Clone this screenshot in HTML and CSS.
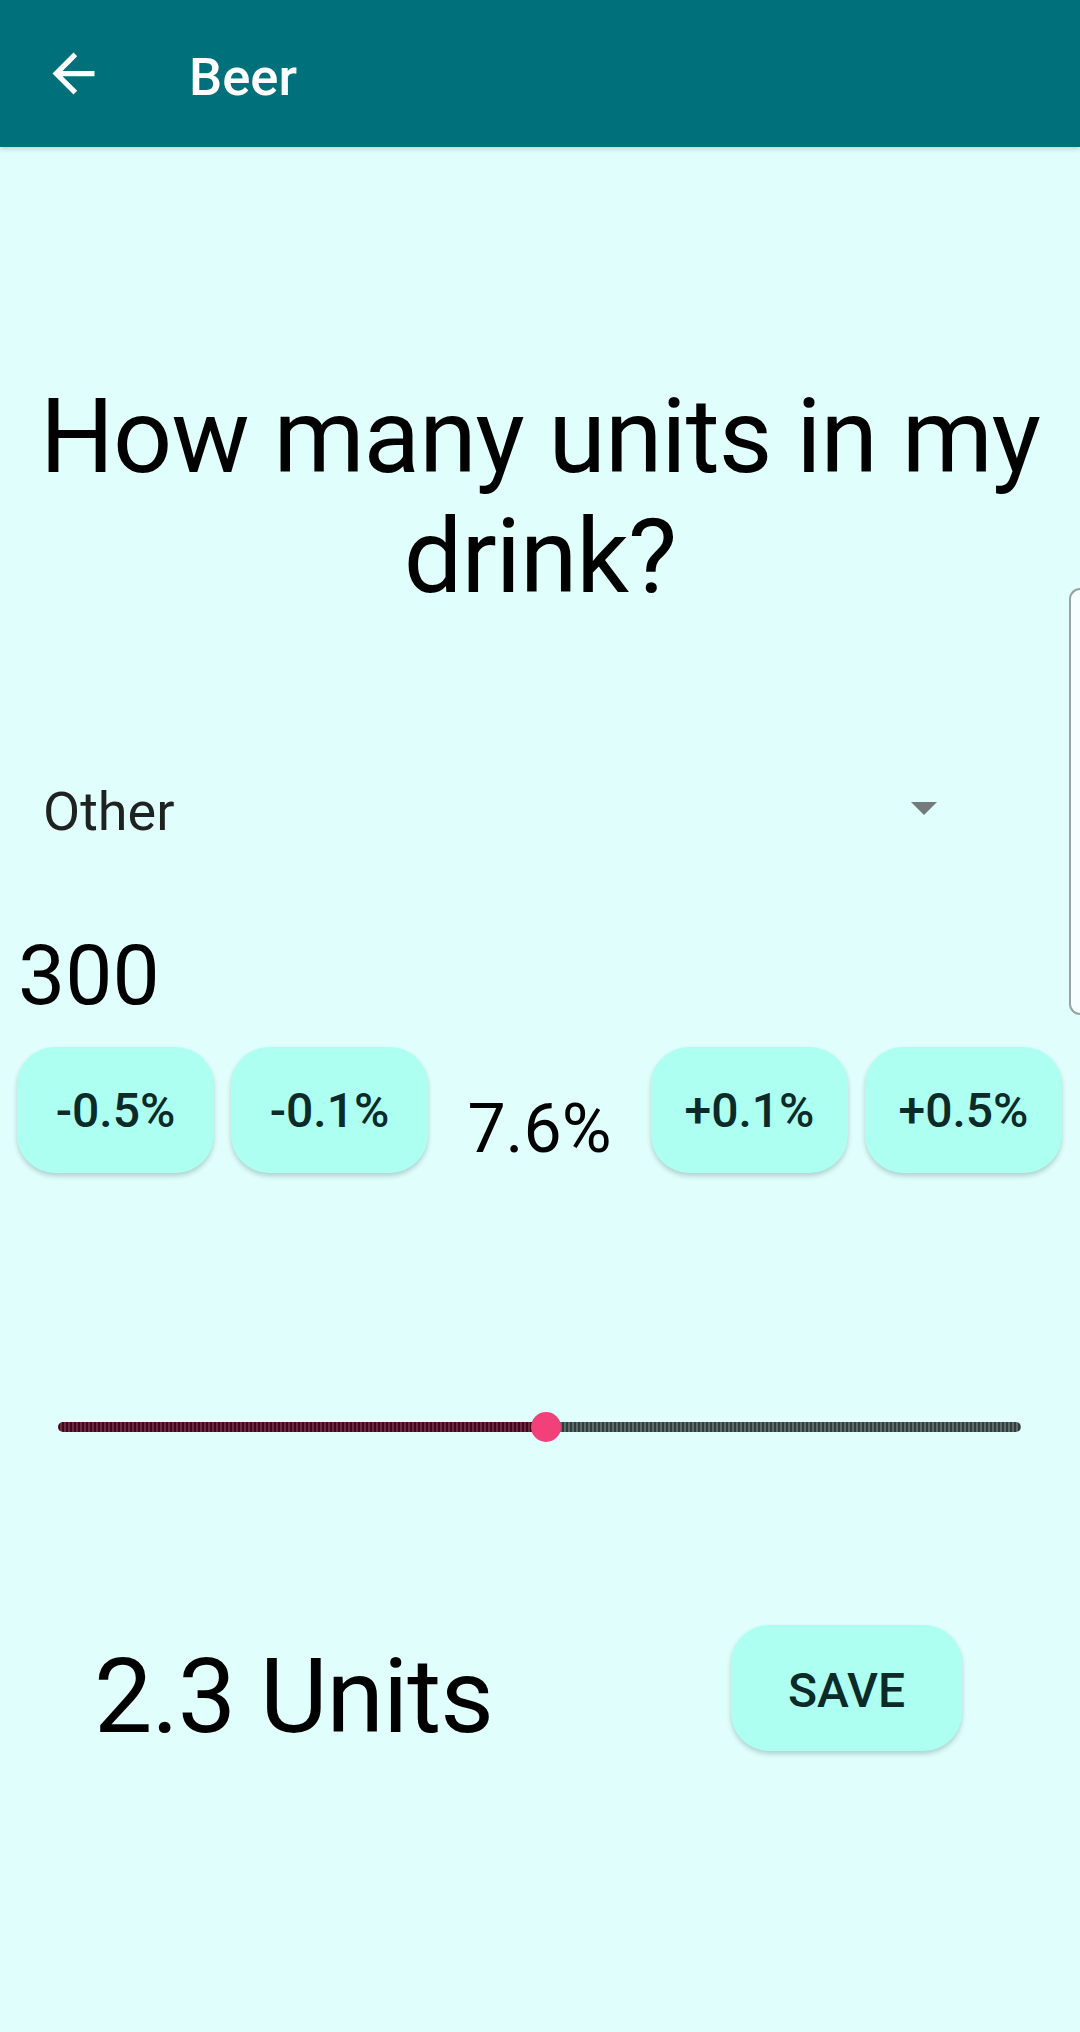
FILE: index.html
```html
<!DOCTYPE html>
<html>
<head>
<meta charset="utf-8">
<link rel="stylesheet" href="styles.css">
</head>
<body>
<header class="appbar">
  <svg class="back" viewBox="0 0 24 24" width="63" height="63"><path fill="#ffffff" d="M20 11H7.83l5.59-5.59L12 4l-8 8 8 8 1.41-1.41L7.83 13H20v-2z"/></svg>
  <div class="title">Beer</div>
</header>
<main class="content">
  <h1 class="question">How many units in my drink?</h1>
  <div class="spinner">
    <span class="spinner-text">Other</span>
    <span class="spinner-arrow"></span>
  </div>
  <div class="volume">300</div>
  <div class="abv-row">
    <div class="btn">-0.5%</div>
    <div class="btn">-0.1%</div>
    <div class="abv">7.6%</div>
    <div class="btn">+0.1%</div>
    <div class="btn">+0.5%</div>
  </div>
  <div class="slider">
    <div class="track">
      <div class="track-active" style="width:50.7%"></div>
      <div class="track-rest"></div>
    </div>
    <div class="thumb" style="left:calc(50.7% - 15px)"></div>
  </div>
  <div class="result-row">
    <div class="units">2.3 Units</div>
    <div class="btn save">SAVE</div>
  </div>
</main>
<div class="edge-panel"></div>
</body>
</html>
```
FILE: styles.css
```css
html, body {
  margin: 0;
  padding: 0;
  background: #e0fffc;
}
body {
  width: 1080px;
  min-height: 2032px;
  overflow: hidden;
  position: relative;
  font-family: Roboto, "Liberation Sans", sans-serif;
  color: #000;
}
.appbar {
  height: 147px;
  background: #00707a;
  display: flex;
  align-items: center;
  box-shadow: 0 2px 5px rgba(0, 0, 0, 0.18);
  position: relative;
  z-index: 1;
}
.back {
  margin-left: 42px;
  flex: none;
  display: block;
}
.title {
  margin-left: 84px;
  margin-top: 7px;
  font-size: 52.5px;
  line-height: 64px;
  font-weight: 500;
  color: #ffffff;
}
.content {
  display: flex;
  flex-direction: column;
}
.question {
  margin: 230px 0 0 0;
  font-size: 104px;
  line-height: 120px;
  font-weight: 400;
  letter-spacing: -1px;
  text-align: center;
  color: #000;
}
.spinner {
  margin: 163px 0 0 0;
  padding: 0 143px 0 43px;
  height: 64px;
  display: flex;
  align-items: center;
  justify-content: space-between;
}
.spinner-text {
  font-size: 54px;
  line-height: 64px;
  color: #1e2221;
}
.spinner-arrow {
  width: 0;
  height: 0;
  border-left: 13px solid transparent;
  border-right: 13px solid transparent;
  border-top: 13px solid #757b7b;
  margin-top: -8px;
}
.volume {
  margin: 83px 0 0 18px;
  font-size: 84px;
  line-height: 98px;
  color: #000;
}
.abv-row {
  margin-top: 22px;
  padding: 0 18px 0 17px;
  display: flex;
  gap: 17px;
  align-items: flex-start;
}
.btn {
  flex: none;
  width: 197px;
  height: 126px;
  border-radius: 38px;
  background: #adfff1;
  box-shadow: 0 3px 5px rgba(0, 40, 40, 0.22);
  display: flex;
  align-items: center;
  justify-content: center;
  font-size: 48px;
  font-weight: 500;
  color: #0c2b28;
}
.abv {
  flex: 1;
  text-align: center;
  margin-top: 42px;
  font-size: 68px;
  line-height: 80px;
  color: #000;
}
.slider {
  margin: 239px 59px 0 58px;
  height: 30px;
  position: relative;
  display: flex;
  align-items: center;
}
.track {
  width: 100%;
  height: 10px;
  border-radius: 5px;
  overflow: hidden;
  display: flex;
}
.track-active {
  height: 100%;
  background: repeating-linear-gradient(90deg, #3a0b1b 0 2px, #722640 2px 4px);
}
.track-rest {
  flex: 1;
  height: 100%;
  background: repeating-linear-gradient(90deg, #323c3c 0 2px, #5e6b6b 2px 4px);
}
.thumb {
  position: absolute;
  top: 0;
  width: 30px;
  height: 30px;
  border-radius: 50%;
  background: #f2407a;
}
.result-row {
  margin-top: 183px;
  padding: 0 118px 0 94px;
  display: flex;
  justify-content: space-between;
  align-items: flex-start;
}
.units {
  margin-top: 12px;
  font-size: 104px;
  line-height: 120px;
  letter-spacing: -1px;
  color: #000;
}
.save {
  width: 231px;
  height: 126px;
  padding-top: 4px;
  box-sizing: border-box;
}
.edge-panel {
  position: absolute;
  top: 588px;
  right: 0;
  width: 9px;
  height: 423px;
  border: 2px solid #9aa3a3;
  border-right: none;
  border-radius: 14px 0 0 14px;
  background: #f6fffe;
}
```
